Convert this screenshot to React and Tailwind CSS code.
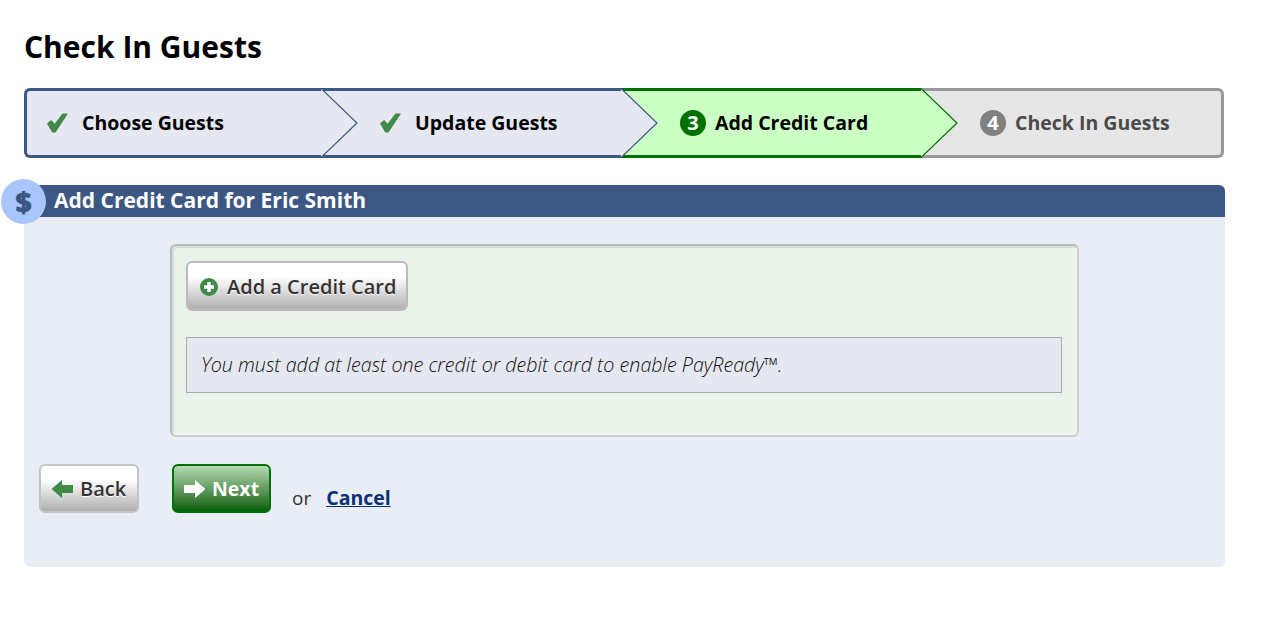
import React from "react";

const Check = () => (
  <svg width="22" height="20" viewBox="0 0 22 20" className="shrink-0">
    <path d="M1 10.5 L5.2 7 L8.6 10.8 L16.5 0.5 L22 0.5 L9.5 19.5 L6.2 19.5 Z" fill="#3f8a46" />
  </svg>
);

const Chevron = ({ color, fill }) => (
  <svg width="37" height="70" viewBox="0 0 37 70" className="absolute top-0 left-full z-10">
    <path d="M0 0.5 L36 35 L0 69.5 Z" fill={fill} />
    <path d="M0 0.5 L36 35 L0 69.5" fill="none" stroke={color} strokeWidth="1.2" />
  </svg>
);

const Num = ({ n, bg }) => (
  <span className={`flex h-[26px] w-[26px] shrink-0 items-center justify-center rounded-full text-[20px] font-bold leading-none text-white ${bg}`}>
    {n}
  </span>
);

const Plus = () => (
  <svg width="18" height="18" viewBox="0 0 18 18" className="shrink-0">
    <circle cx="9" cy="9" r="9" fill="#3f8a46" />
    <path d="M9 4 V14 M4 9 H14" stroke="#fff" strokeWidth="3.4" />
  </svg>
);

const Arrow = ({ color, flip }) => (
  <svg width="22" height="18" viewBox="0 0 22 18" className={`shrink-0 ${flip ? "-scale-x-100" : ""}`}>
    <path d="M0 5 H11 V0 L21.5 9 L11 18 V13 H0 Z" fill={color} />
  </svg>
);

export default function App() {
  return (
    <div className="min-h-[632px] bg-white font-['Open_Sans',sans-serif] text-black">
      <div className="pl-6 pr-9 pt-[27px]">
        <h1 className="h-[41px] text-[30px] font-bold leading-[40px]">Check In Guests</h1>

        <div className="mt-5 flex h-[70px] w-[1200px] text-[19.5px] font-bold">
          <div className="relative flex w-[298px] items-center gap-[14px] rounded-l-[6px] border-y-[3px] border-l-[3px] border-[#3c5783] bg-[#e5e8f1] pl-[19px]">
            <Check />
            <span>Choose Guests</span>
            <div className="absolute -top-[3px] left-[294px]"><Chevron color="#3c5783" fill="#e5e8f1" /></div>
          </div>
          <div className="relative flex w-[300px] items-center gap-[14px] border-y-[3px] border-[#3c5783] bg-[#e5e8f1] pl-[57px]">
            <Check />
            <span>Update Guests</span>
            <div className="absolute -top-[3px] left-[299px]"><Chevron color="#3c5783" fill="#e5e8f1" /></div>
          </div>
          <div className="relative flex w-[300px] items-center gap-[9px] border-y-[3px] border-[#007000] bg-[#ccffc4] pl-[58px]">
            <Num n="3" bg="bg-[#007000]" />
            <span>Add Credit Card</span>
            <div className="absolute -top-[3px] left-[299px]"><Chevron color="#007000" fill="#ccffc4" /></div>
          </div>
          <div className="flex w-[302px] items-center gap-[9px] rounded-r-[6px] border-y-[3px] border-r-[3px] border-[#999999] bg-[#e6e6e6] pl-[58px] text-[#4a4a4a]">
            <Num n="4" bg="bg-[#808080]" />
            <span>Check In Guests</span>
          </div>
        </div>

        <div className="relative mt-[27px] h-[382px] w-[1201px] rounded-[6px] bg-[#e9edf6]">
          <div className="flex h-8 items-center rounded-t-[6px] bg-[#3c5783] pb-[1px] pl-[30px] text-[21px] font-bold leading-none text-white">
            Add Credit Card for Eric Smith
          </div>
          <div className="absolute -left-[23px] -top-[6px] flex h-[45px] w-[45px] items-center justify-center rounded-full bg-[#a8c6fb] text-[28px] font-extrabold leading-none text-[#3c5783] [text-shadow:0_0_1px_#3c5783]">
            $
          </div>

          <div className="ml-[146px] mt-[27px] h-[193px] w-[909px] rounded-[6px] border-2 border-[#cccccc] border-t-[#b8bcb8] border-l-[#b8bcb8] bg-[#e9f3e9] pl-[14px] pt-[15px] shadow-[inset_2px_2px_1px_#d5dfd5,inset_-1px_-1px_0_#f4f8f4]">
            <button className="flex h-[50px] w-[222px] items-center gap-[9px] rounded-[6px] border-2 border-[#bbbbbb] bg-gradient-to-b from-white from-30% to-[#b0b0b0] pl-[12px] pt-[2px] text-[20px] font-semibold text-[#333333] [text-shadow:0_1px_1px_#ffffff]">
              <Plus />
              <span>Add a Credit Card</span>
            </button>
            <div className="mt-[26px] flex h-[56px] w-[876px] items-center border border-[#aaaaaa] bg-[#e5e8f1] pl-[14px] text-[19.7px] font-light italic text-[#111111]">
              You must add at least one credit or debit card to enable PayReady™.
            </div>
          </div>

          <div className="ml-[15px] mt-[27px] flex items-start">
            <button className="flex h-[49px] w-[100px] items-center gap-[7px] rounded-[6px] border-2 border-[#c4c4c4] bg-gradient-to-b from-white from-30% to-[#b0b0b0] pl-[10px] text-[20px] font-semibold text-[#333333] [text-shadow:0_1px_1px_#ffffff]">
              <Arrow color="#3f8a46" flip />
              <span>Back</span>
            </button>
            <button className="ml-[33px] flex h-[49px] w-[99px] items-center gap-[6px] rounded-[6px] border-2 border-[#007000] bg-gradient-to-b from-[#b6dbb6] to-[#005f00] pl-[10px] text-[19.5px] font-bold text-white">
              <Arrow color="#ffffff" />
              <span>Next</span>
            </button>
            <span className="ml-[21px] mt-[20px] text-[19px] leading-[28px] text-[#333333]">or</span>
            <a href="#" className="ml-[15px] mt-[20px] text-[19.5px] font-bold leading-[28px] text-[#0a3178] underline">Cancel</a>
          </div>
        </div>
      </div>
    </div>
  );
}
